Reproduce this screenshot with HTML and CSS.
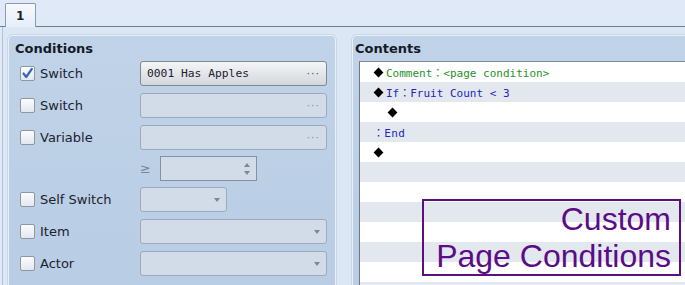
FILE: index.html
```html
<!DOCTYPE html>
<html lang="en">

<head>
    <meta charset="UTF-8">
    <title>Event Page Conditions</title>
    <link rel="stylesheet" href="styles.css">
</head>

<body>
    <div class="tabs">
        <div class="tab">1</div>
    </div>

    <div class="page">
        <section class="panel conditions">
            <h2>Conditions</h2>

            <div class="cond-row">
                <span class="check on">
                    <svg width="13" height="13" viewBox="0 0 13 13"><path d="M2.5 6.5 L5.2 10 L10.8 2" fill="none" stroke="#3d63b8" stroke-width="2.2" stroke-linecap="round" stroke-linejoin="round"/></svg>
                </span>
                <span class="label">Switch</span>
                <div class="field wide enabled"><span class="value">0001 Has Apples</span><span class="dots">···</span></div>
            </div>

            <div class="cond-row">
                <span class="check"></span>
                <span class="label">Switch</span>
                <div class="field wide"><span class="value"></span><span class="dots">···</span></div>
            </div>

            <div class="cond-row">
                <span class="check"></span>
                <span class="label">Variable</span>
                <div class="field wide"><span class="value"></span><span class="dots">···</span></div>
            </div>

            <div class="cond-row tight">
                <span class="geq">≥</span>
                <div class="field spin"><span class="value"></span>
                    <span class="arrows"><i class="up"></i><i class="down"></i></span>
                </div>
            </div>

            <div class="cond-row">
                <span class="check"></span>
                <span class="label">Self Switch</span>
                <div class="field combo short"><span class="value"></span><i class="down"></i></div>
            </div>

            <div class="cond-row">
                <span class="check"></span>
                <span class="label">Item</span>
                <div class="field combo wide"><span class="value"></span><i class="down"></i></div>
            </div>

            <div class="cond-row">
                <span class="check"></span>
                <span class="label">Actor</span>
                <div class="field combo wide"><span class="value"></span><i class="down"></i></div>
            </div>
        </section>

        <div class="splitter"></div>

        <section class="panel contents">
            <h2>Contents</h2>
            <ul class="list">
                <li><span class="gem"></span><span class="green">Comment：&lt;page condition&gt;</span></li>
                <li><span class="gem"></span><span class="blue">If：Fruit Count &lt; 3</span></li>
                <li class="indent"><span class="gem"></span></li>
                <li class="end"><span class="blue">：End</span></li>
                <li><span class="gem"></span></li>
                <li></li>
                <li></li>
                <li></li>
                <li></li>
                <li></li>
                <li></li>
                <li></li>
            </ul>
        </section>

        <div class="banner">Custom<br>Page Conditions</div>
    </div>
</body>

</html>
```

FILE: styles.css
```css
body {
    margin: 0;
    width: 685px;
    height: 285px;
    overflow: hidden;
    background-color: #dfe9f7;
    font-family: "DejaVu Sans", sans-serif;
    font-size: 13px;
    color: #1b2230;
}

.tabs {
    height: 26px;
    border-bottom: 1px solid #6c7e90;
    display: flex;
    align-items: flex-end;
    padding-left: 5px;
}

.tab {
    width: 31px;
    height: 24px;
    margin-bottom: -1px;
    box-sizing: border-box;
    border: 1px solid #8d9aaa;
    border-bottom: none;
    border-radius: 2px 2px 0 0;
    background: linear-gradient(#f6f9fd, #e6eef9);
    font-size: 12px;
    font-weight: bold;
    padding: 5px 0 0 10px;
}

.page {
    position: relative;
    display: flex;
    margin-left: 2px;
    border-left: 1px solid #b3c3d6;
    padding: 8px 0 0 5px;
    height: 250px;
    overflow: hidden;
    background-color: #dce7f5;
}

.panel {
    background: linear-gradient(#c0d3e8, #b8cce4);
    border: 1px solid #e8f0f9;
    border-radius: 5px 5px 0 0;
    box-shadow: 0 0 0 1px #c9d6e6;
    height: 270px;
}

.panel h2 {
    margin: 0;
    font-size: 13px;
    line-height: 17px;
    font-weight: bold;
    color: #141a26;
}

.conditions {
    width: 328px;
    padding: 4px 0 0 11px;
    box-sizing: border-box;
    flex: none;
}

.conditions h2 {
    margin: 0 0 4px -5px;
}

.cond-row {
    display: flex;
    align-items: center;
    height: 25px;
    margin-bottom: 7px;
}

.cond-row.tight {
    margin-top: -1px;
    margin-bottom: 6px;
}

.check {
    width: 15px;
    height: 15px;
    box-sizing: border-box;
    border: 1px solid #8e97a3;
    border-radius: 2px;
    background: linear-gradient(#fbfcfd, #e3e8ee);
    margin-right: 5px;
    display: flex;
    align-items: center;
    justify-content: center;
}

.label {
    width: 100px;
}

.field {
    height: 25px;
    box-sizing: border-box;
    border: 1px solid #9daab9;
    border-radius: 3px;
    background-color: #d2dce8;
    display: flex;
    align-items: center;
    padding: 0 6px;
}

.field .value {
    flex: 1;
    font-family: "DejaVu Sans Mono", monospace;
    font-size: 11.3px;
}

.field.enabled {
    border-color: #7f8893;
    background: linear-gradient(#f4f5f6, #d3d7dc);
}

.wide {
    width: 187px;
}

.short {
    width: 87px;
}

.dots {
    color: #8a95a2;
    font-size: 11px;
    letter-spacing: 1px;
}

.enabled .dots {
    color: #4d5560;
}

.geq {
    margin-left: 120px;
    width: 20px;
    color: #7c8796;
    font-size: 13px;
}

.spin {
    width: 97px;
    border-color: #8392a3;
    border-radius: 0;
}

.arrows {
    display: flex;
    flex-direction: column;
    gap: 4px;
}

.up,
.down {
    display: block;
    width: 0;
    height: 0;
    border-left: 3px solid transparent;
    border-right: 3px solid transparent;
}

.up {
    border-bottom: 4px solid #7d8792;
}

.down {
    border-top: 4px solid #7d8792;
}

.splitter {
    width: 16px;
    flex: none;
}

.contents {
    flex: 1;
    margin-right: -12px;
    padding: 4px 0 0 2px;
}

.contents h2 {
    margin-bottom: 4px;
}

.list {
    list-style: none;
    margin: 0 0 0 4px;
    padding: 0;
    background-color: #fff;
    border-top: 1px solid #7c8a99;
    border-left: 1px solid #6a7888;
    height: 240px;
    font-family: "DejaVu Sans Mono", "Noto Sans CJK JP", monospace;
    font-size: 11px;
}

.list li {
    height: 20px;
    display: flex;
    align-items: center;
    padding-left: 15px;
}

.list li:nth-child(even) {
    background-color: #e3e8ef;
}

.list li.indent {
    padding-left: 29px;
}

.list li.end {
    padding-left: 13px;
}

.end .blue {
    letter-spacing: 0.3px;
}

.gem {
    width: 7px;
    height: 7px;
    background-color: #000;
    transform: rotate(45deg);
    margin-right: 4px;
}

.green {
    color: #27912a;
}

.blue {
    color: #2424c2;
}

.banner {
    position: absolute;
    left: 419px;
    top: 172px;
    width: 259px;
    height: 77px;
    box-sizing: border-box;
    border: 2px solid #5b1080;
    padding-right: 8px;
    text-align: right;
    font-family: "Liberation Sans", Arial, sans-serif;
    font-size: 32px;
    line-height: 37px;
    color: #5b0c86;
}
```
